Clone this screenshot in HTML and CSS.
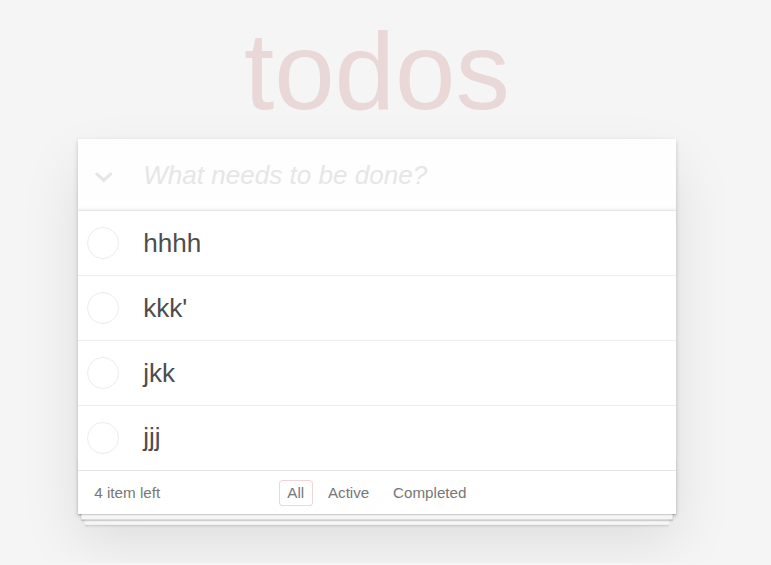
FILE: index.html
```html
<!DOCTYPE html>
<html lang="en">
<head>
<meta charset="utf-8">
<title>todos</title>
<link rel="stylesheet" href="styles.css">
</head>
<body>
<div class="page">
  <h1 class="title">todos</h1>
  <section class="todoapp">
    <header class="header">
      <span class="toggle-all">
        <svg width="20" height="12" viewBox="0 0 20 12"><polyline points="2,2 10,9.5 18,2" fill="none" stroke="#e6e6e6" stroke-width="3.2" stroke-linecap="butt" stroke-linejoin="miter"/></svg>
      </span>
      <input class="new-todo" placeholder="What needs to be done?">
    </header>
    <ul class="todo-list">
      <li class="todo"><span class="check"></span><label class="todo-label">hhhh</label></li>
      <li class="todo"><span class="check"></span><label class="todo-label">kkk'</label></li>
      <li class="todo"><span class="check"></span><label class="todo-label">jkk</label></li>
      <li class="todo"><span class="check"></span><label class="todo-label">jjj</label></li>
    </ul>
    <footer class="footer">
      <span class="todo-count">4 item left</span>
      <ul class="filters">
        <li><a class="filter selected">All</a></li>
        <li><a class="filter">Active</a></li>
        <li><a class="filter">Completed</a></li>
      </ul>
      <span class="spacer"></span>
    </footer>
  </section>
</div>
</body>
</html>
```

FILE: styles.css
```css
html, body {
  margin: 0;
  padding: 0;
}
body {
  background: #f5f5f5;
  font-family: "Liberation Sans", Arial, Helvetica, sans-serif;
  font-size: 14px;
  line-height: 1.4em;
  color: #4d4d4d;
  font-weight: 300;
}
.page {
  zoom: 1.087;
  width: 550px;
  margin-left: 71.75px;
  padding-top: 8px;
  padding-bottom: 5px;
}
.title {
  margin: 0 0 5px;
  font-size: 100px;
  line-height: 115px;
  font-weight: 100;
  text-align: center;
  color: rgba(175, 47, 47, 0.15);
}
.todoapp {
  background: #fff;
  position: relative;
  box-shadow: 0 2px 4px 0 rgba(0, 0, 0, 0.2), 0 25px 50px 0 rgba(0, 0, 0, 0.1);
  margin-bottom: 40px;
}
.header {
  display: flex;
  align-items: center;
  box-shadow: inset 0 -2px 1px rgba(0, 0, 0, 0.03);
  background: rgba(0, 0, 0, 0.003);
}
.toggle-all {
  width: 48px;
  flex: none;
  display: flex;
  justify-content: center;
  margin-right: 12px;
  padding-top: 5px;
}
.toggle-all svg {
  display: block;
  width: 18px;
  height: 11px;
}
.new-todo {
  flex: 1;
  min-width: 0;
  margin: 0;
  padding: 17px 16px 15px 0;
  border: none;
  outline: none;
  background: transparent;
  font-family: inherit;
  font-size: 24px;
  line-height: 1.4em;
  height: 65.6px;
  box-sizing: border-box;
  color: inherit;
}
.new-todo::placeholder {
  font-style: italic;
  font-weight: 300;
  color: #e6e6e6;
}
.todo-list {
  margin: 0;
  padding: 0;
  list-style: none;
  border-top: 1px solid #e6e6e6;
}
.todo {
  display: flex;
  align-items: center;
  font-size: 24px;
  border-bottom: 1px solid #ededed;
}
.todo:last-child {
  border-bottom: none;
}
.check {
  flex: none;
  width: 29.6px;
  height: 29.6px;
  box-sizing: border-box;
  border: 1px solid #ededed;
  border-radius: 50%;
  margin-left: 8.2px;
}
.todo-label {
  padding: 15px 15px 15px 0;
  margin-left: 22.2px;
  line-height: 1.2;
  color: #4d4d4d;
  word-break: break-all;
}
.footer {
  position: relative;
  display: grid;
  grid-template-columns: 1fr auto 1fr;
  align-items: start;
  color: #777;
  padding: 10px 15px;
  height: 20px;
  border-top: 1px solid #e6e6e6;
}
.footer::before {
  content: '';
  position: absolute;
  right: 0;
  bottom: 0;
  left: 0;
  height: 50px;
  overflow: hidden;
  box-shadow: 0 1px 1px rgba(0, 0, 0, 0.2),
              0 8px 0 -3px #f6f6f6,
              0 9px 1px -3px rgba(0, 0, 0, 0.2),
              0 16px 0 -6px #f6f6f6,
              0 17px 2px -6px rgba(0, 0, 0, 0.2);
  pointer-events: none;
}
.todo-count {
  position: relative;
  line-height: 20px;
}
.filters {
  position: relative;
  display: flex;
  margin: 0;
  padding: 0;
  list-style: none;
}
.filter {
  display: block;
  color: inherit;
  margin: -2px 3px;
  padding: 3px 7px;
  line-height: 16px;
  border: 1px solid transparent;
  border-radius: 3px;
  text-decoration: none;
}
.filter.selected {
  border-color: rgba(175, 47, 47, 0.2);
}
```
